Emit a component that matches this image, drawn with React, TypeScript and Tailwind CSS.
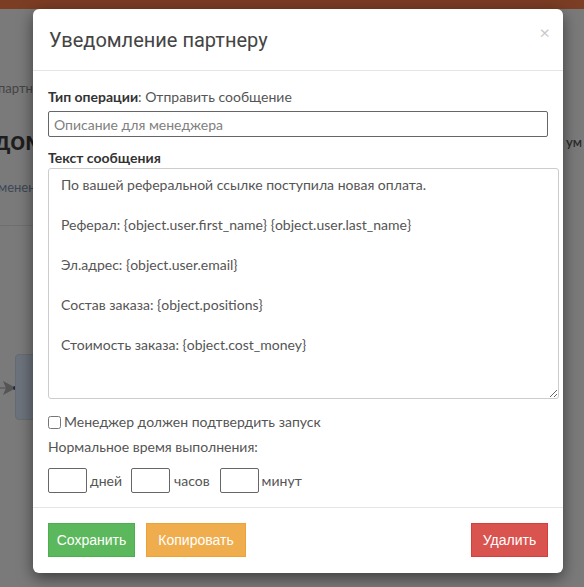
import React from "react";

const font = { fontFamily: "Lato, 'Open Sans', sans-serif" };

const messageText = `По вашей реферальной ссылке поступила новая оплата.

Реферал: {object.user.first_name} {object.user.last_name}

Эл.адрес: {object.user.email}

Состав заказа: {object.positions}

Стоимость заказа: {object.cost_money}`;

const App = () => {
  return (
    <div className="relative w-[584px] h-[587px] overflow-hidden bg-[#7a7a7a]" style={font}>
      {/* page behind the backdrop */}
      <div className="h-[9px] bg-[#7b3d24]" />
      <div className="flex justify-between text-[#3a3a3a]">
        <div className="flex flex-col">
          <div className="mt-[70px] -ml-[2px] text-[13px] text-[#444]">партнеру</div>
          <div className="mt-[22px] -ml-[6px] text-[26px] font-bold text-[#1e1e1e]">домление</div>
          <div className="mt-[18px] -ml-[2px] text-[13px] text-[#3d4656]">менения</div>
          <div className="mt-[28px] h-px w-[40px] bg-[#6f6f6f]" />
          <div className="mt-[128px] flex items-center">
            <svg width="18" height="16" viewBox="0 0 18 16" className="mt-[2px]">
              <path d="M0 8h8" stroke="#555" strokeWidth="1.2" />
              <path d="M3 1 L16 8 L3 15 L6 8 Z" fill="#555" />
              <circle cx="15" cy="8" r="2" fill="#1f2a3a" />
            </svg>
            <div className="-ml-[3px] h-[66px] w-[30px] rounded-[4px] border border-[#656b74] bg-[#6d737c]" />
          </div>
        </div>
        <div className="mt-[124px] mr-[2px] text-[13px] font-semibold text-[#2b2b2b]">ум</div>
      </div>

      {/* modal */}
      <div className="absolute left-[33px] top-[9px] w-[530px] rounded-[6px] bg-white shadow-[0_5px_15px_rgba(0,0,0,0.5)]">
        <div className="flex items-start justify-between border-b border-[#e5e5e5] px-[16px] pt-[18px] pb-[17px]">
          <h4 className="text-[20px] leading-[26px] text-[#444]" style={{ fontFamily: "Roboto, sans-serif" }}>
            Уведомление партнеру
          </h4>
          <button className="mt-[-4px] mr-[-3px] text-[18px] leading-none text-[#c8c8c8]">×</button>
        </div>

        <div className="px-[15px] pt-[16px] pb-[14px] text-[14px] text-[#555]">
          <div className="leading-[20px]">
            <span className="font-bold text-[#333]">Тип операции</span>: Отправить сообщение
          </div>
          <input
            className="mt-[4px] block h-[26px] w-[500px] rounded-[2px] border border-[#666] px-[5px] text-[14px] text-[#555] placeholder:text-[#808080] outline-none"
            placeholder="Описание для менеджера"
          />
          <div className="mt-[11px] leading-[20px] font-bold text-[#333]">Текст сообщения</div>
          <textarea
            className="block h-[231px] w-[511px] rounded-[3px] border border-[#ccc] px-[12px] pt-[6px] text-[14px] leading-[20px] text-[#555] outline-none"
            defaultValue={messageText}
          />
          <label className="mt-[13px] flex items-center gap-[3px] leading-[20px]">
            <input type="checkbox" className="h-[13px] w-[13px]" />
            <span>Менеджер должен подтвердить запуск</span>
          </label>
          <div className="mt-[5px] leading-[20px]">Нормальное время выполнения:</div>
          <div className="mt-[11px] flex items-center">
            <input className="h-[25px] w-[39px] rounded-[2px] border border-[#666] outline-none" />
            <span className="ml-[3px] mr-[9px]">дней</span>
            <input className="h-[25px] w-[39px] rounded-[2px] border border-[#666] outline-none" />
            <span className="ml-[4px] mr-[10px]">часов</span>
            <input className="h-[25px] w-[39px] rounded-[2px] border border-[#666] outline-none" />
            <span className="ml-[3px]">минут</span>
          </div>
        </div>

        <div
          className="flex items-center border-t border-[#e5e5e5] px-[15px] pt-[15px] pb-[16px] text-[14px] text-white"
          style={{ fontFamily: "'Liberation Sans', Arial, sans-serif" }}
        >
          <button className="h-[34px] w-[87px] bg-[#5cb85c] border border-[#4cae4c]">Сохранить</button>
          <button className="ml-[11px] h-[34px] w-[100px] bg-[#f0ad4e] border border-[#eea236]">Копировать</button>
          <button className="ml-auto h-[34px] w-[77px] bg-[#d9534f] border border-[#d43f3a]">Удалить</button>
        </div>
      </div>
    </div>
  );
};

export default App;
